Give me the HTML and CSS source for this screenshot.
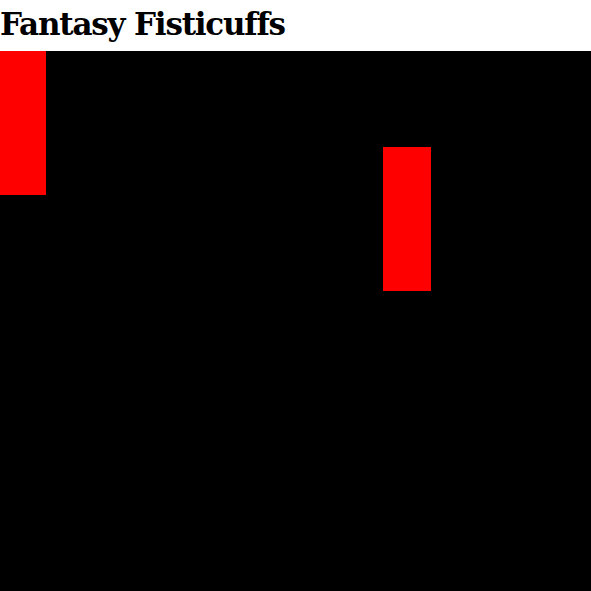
FILE: index.html
```html
<!DOCTYPE html>
<html lang="en">

<head>
    <meta charset="UTF-8">
    <meta name="viewport" content="width=device-width, initial-scale=1.0">
    <title>Fantasy Fisticuffs</title>
    <link rel="stylesheet" href="styles.css">
</head>

<body>
    <h1 id="title">Fantasy Fisticuffs</h1>
    <div id="arena">
        <div class="fighter player"></div>
        <div class="fighter enemy"></div>
    </div>
</body>

</html>
```

FILE: styles.css
```css
html,
body {
    height: 100%;
}

body {
    margin: 0;
    display: flex;
    flex-direction: column;
    background-color: #fff;
    font-family: "DejaVu Serif", "Liberation Serif", serif;
}

#title {
    margin: 0;
    height: 51px;
    font-size: 31px;
    line-height: 49px;
    font-weight: bold;
    letter-spacing: -1.2px;
    color: #000;
    white-space: nowrap;
}

#arena {
    position: relative;
    flex: 1;
    background-color: #000;
    overflow: hidden;
}

.fighter {
    position: absolute;
    width: 48px;
    height: 144px;
    background-color: #f00;
}

.player {
    left: -2px;
    top: 0;
}

.enemy {
    left: 383px;
    top: 96px;
}
```
